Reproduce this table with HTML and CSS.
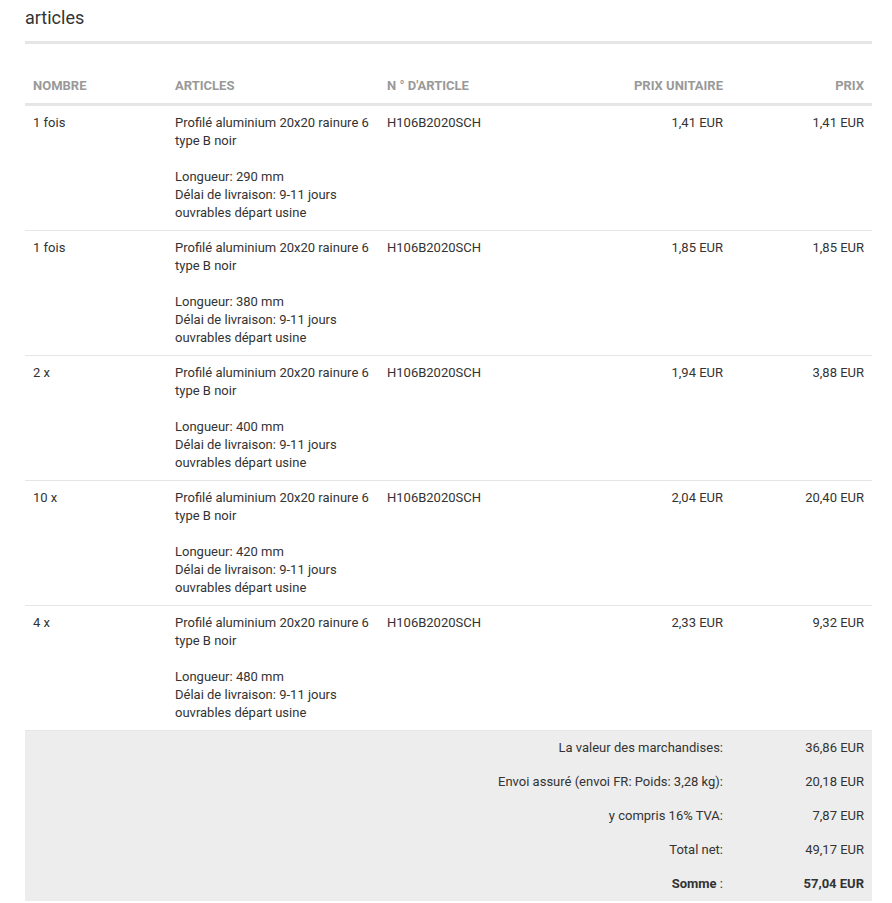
FILE: index.html
```html
<!DOCTYPE html>
<html lang="fr">
<head>
<meta charset="utf-8">
<title>articles</title>
<link rel="stylesheet" href="styles.css">
</head>
<body>
<div class="page">
  <h2 class="title">articles</h2>
  <table class="items">
    <colgroup>
      <col class="c-qty"><col class="c-art"><col class="c-num"><col class="c-unit"><col class="c-price">
    </colgroup>
    <thead>
      <tr>
        <th>Nombre</th>
        <th>Articles</th>
        <th>N ° d'article</th>
        <th class="r">Prix unitaire</th>
        <th class="r">Prix</th>
      </tr>
    </thead>
    <tbody>
      <tr>
        <td>1 fois</td>
        <td>Profilé aluminium 20x20 rainure 6 type B noir<br><br>Longueur: 290 mm<br>Délai de livraison: 9-11 jours ouvrables départ usine</td>
        <td>H106B2020SCH</td>
        <td class="r">1,41 EUR</td>
        <td class="r">1,41 EUR</td>
      </tr>
      <tr>
        <td>1 fois</td>
        <td>Profilé aluminium 20x20 rainure 6 type B noir<br><br>Longueur: 380 mm<br>Délai de livraison: 9-11 jours ouvrables départ usine</td>
        <td>H106B2020SCH</td>
        <td class="r">1,85 EUR</td>
        <td class="r">1,85 EUR</td>
      </tr>
      <tr>
        <td>2 x</td>
        <td>Profilé aluminium 20x20 rainure 6 type B noir<br><br>Longueur: 400 mm<br>Délai de livraison: 9-11 jours ouvrables départ usine</td>
        <td>H106B2020SCH</td>
        <td class="r">1,94 EUR</td>
        <td class="r">3,88 EUR</td>
      </tr>
      <tr>
        <td>10 x</td>
        <td>Profilé aluminium 20x20 rainure 6 type B noir<br><br>Longueur: 420 mm<br>Délai de livraison: 9-11 jours ouvrables départ usine</td>
        <td>H106B2020SCH</td>
        <td class="r">2,04 EUR</td>
        <td class="r">20,40 EUR</td>
      </tr>
      <tr>
        <td>4 x</td>
        <td>Profilé aluminium 20x20 rainure 6 type B noir<br><br>Longueur: 480 mm<br>Délai de livraison: 9-11 jours ouvrables départ usine</td>
        <td>H106B2020SCH</td>
        <td class="r">2,33 EUR</td>
        <td class="r">9,32 EUR</td>
      </tr>
    </tbody>
    <tfoot>
      <tr>
        <td colspan="4" class="r">La valeur des marchandises:</td>
        <td class="r">36,86 EUR</td>
      </tr>
      <tr>
        <td colspan="4" class="r">Envoi assuré (envoi FR: Poids: 3,28 kg):</td>
        <td class="r">20,18 EUR</td>
      </tr>
      <tr>
        <td colspan="4" class="r">y compris 16% TVA:</td>
        <td class="r">7,87 EUR</td>
      </tr>
      <tr>
        <td colspan="4" class="r">Total net:</td>
        <td class="r">49,17 EUR</td>
      </tr>
      <tr class="sum">
        <td colspan="4" class="r"><strong>Somme</strong> :</td>
        <td class="r"><strong>57,04 EUR</strong></td>
      </tr>
    </tfoot>
  </table>
</div>
</body>
</html>
```
FILE: styles.css
```css
html, body {
  margin: 0;
  padding: 0;
  background: #fff;
}
body {
  font-family: Roboto, "Liberation Sans", Arial, sans-serif;
  color: #333;
  font-size: 13px;
  line-height: 18px;
}
.page {
  padding: 0 20px 0 25px;
}
.title {
  margin: 0 0 25px 0;
  padding: 6px 0 11px 0;
  font-size: 18px;
  line-height: 24px;
  font-weight: 400;
  color: #333;
  border-bottom: 3px solid #e6e6e6;
}
.items {
  width: 100%;
  table-layout: fixed;
  border-collapse: separate;
  border-spacing: 0;
}
.c-qty { width: 142px; }
.c-art { width: 212px; }
.c-num { width: 176px; }
.c-unit { width: 176px; }
.c-price { width: 141px; }
.items th {
  text-align: left;
  font-size: 13px;
  font-weight: 700;
  text-transform: uppercase;
  color: #999;
  padding: 8px;
  line-height: 18px;
  border-bottom: 3px solid #e6e6e6;
}
.items td {
  padding: 8px;
  vertical-align: top;
  line-height: 18px;
}
.items tbody td {
  border-bottom: 1px solid #e6e6e6;
}
.items .r {
  text-align: right;
}
.items tfoot td {
  background: #ededed;
}
.items tfoot strong {
  font-weight: 700;
}
```
